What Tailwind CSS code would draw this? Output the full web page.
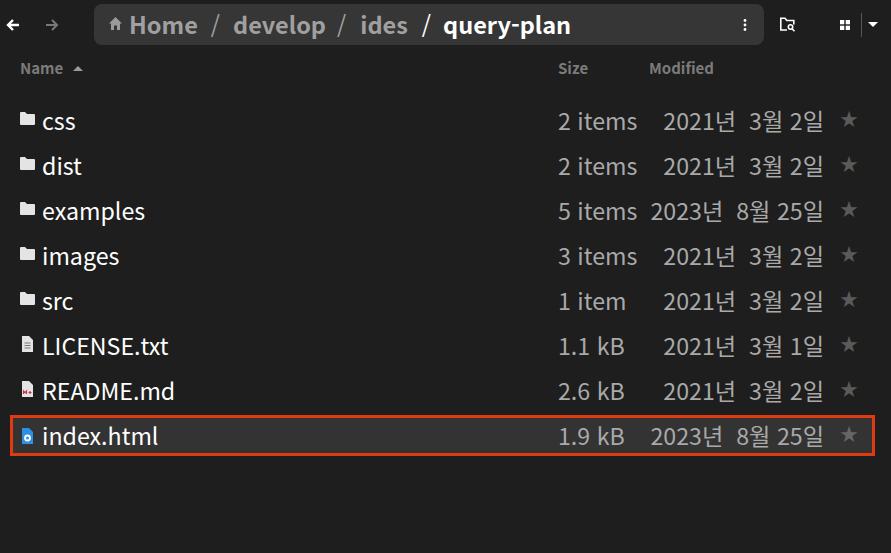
<!DOCTYPE html>
<html lang="ko">
<head>
    <meta charset="UTF-8">
    <title>query-plan</title>
    <script src="https://cdn.jsdelivr.net/npm/@tailwindcss/browser@4"></script>
</head>
<body class="bg-[#1e1e1e] w-[891px] h-[553px] overflow-hidden font-['Noto_Sans_CJK_KR','Noto_Sans',sans-serif]">

    <!-- toolbar -->
    <div class="flex items-center h-[41px] mt-1 text-white">
        <svg class="w-[14px] h-[14px] ml-[6px]" viewBox="0 0 14 14" fill="none" stroke="#fff" stroke-width="2.4"><path d="M13 7H2M7 2 2 7l5 5"/></svg>
        <svg class="w-[14px] h-[14px] ml-[25px] opacity-40" viewBox="0 0 14 14" fill="none" stroke="#fff" stroke-width="2"><path d="M1 7h11M7 2l5 5-5 5"/></svg>
        <div class="flex items-center w-[670px] h-full ml-[35px] bg-[#363636] rounded-lg pl-[15px] pr-[17px] text-[23.5px]">
            <svg class="w-[13px] h-[13px] shrink-0 mb-[3px]" viewBox="0 0 13 13" fill="#9a9a9a"><path d="M6.5 0 13 6.5h-2V13H8V8.5H5V13H2V6.5H0z"/></svg>
            <span class="ml-[7px] font-bold text-[#a0a0a0]">Home</span>
            <span class="ml-[13px] text-[#a0a0a0]">/</span>
            <span class="ml-[13px] font-bold text-[#a0a0a0]">develop</span>
            <span class="ml-[11px] text-[#a0a0a0]">/</span>
            <span class="ml-[14px] font-bold text-[#a0a0a0]">ides</span>
            <span class="ml-[14px] text-white">/</span>
            <span class="ml-[12px] font-bold text-white">query-plan</span>
            <svg class="w-[4px] h-[12px] ml-auto" viewBox="0 0 4 12" fill="#fff"><circle cx="2" cy="1.5" r="1.4"/><circle cx="2" cy="6" r="1.4"/><circle cx="2" cy="10.5" r="1.4"/></svg>
        </div>
        <svg class="w-[17px] h-[15px] ml-[15px]" viewBox="0 0 17 15" fill="none" stroke="#fff" stroke-width="1.6"><path d="M8 13H1.8V1.2H6l1.8 2.3h7v4"/><circle cx="11.5" cy="10" r="2.2"/><path d="m13 11.8 2.5 2.5"/></svg>
        <svg class="w-[10px] h-[10px] ml-[44px]" viewBox="0 0 10 10" fill="#fff"><rect width="4.3" height="4.3"/><rect x="5.7" width="4.3" height="4.3"/><rect y="5.7" width="4.3" height="4.3"/><rect x="5.7" y="5.7" width="4.3" height="4.3"/></svg>
        <div class="w-px h-[24px] bg-[#555] ml-[11px]"></div>
        <svg class="w-[10px] h-[5px] ml-[6px]" viewBox="0 0 10 5" fill="#fff"><path d="M0 0h10L5 5z"/></svg>
    </div>

    <!-- column header -->
    <div class="flex items-center h-[23px] mt-[12px] text-[15px] font-bold text-[#7b7b7b]">
        <div class="flex items-center w-[558px] pl-[20px]">
            <span>Name</span>
            <svg class="w-[10px] h-[5px] ml-[10px]" viewBox="0 0 10 5" fill="#9a9a9a"><path d="M0 5h10L5 0z"/></svg>
        </div>
        <span class="w-[91px]">Size</span>
        <span>Modified</span>
    </div>

    <!-- file list -->
    <div class="mt-[18px] flex flex-col text-[23.2px] leading-[35px] text-[#a9a9a9]">
        <div class="flex items-center h-[45px] pl-[20px]">
            <svg class="w-[15px] h-[13px] shrink-0 mb-1" viewBox="0 0 15 13" fill="#e4e4e4"><path d="M0 1a1 1 0 0 1 1-1h4l2 2h7a1 1 0 0 1 1 1v9a1 1 0 0 1-1 1H1a1 1 0 0 1-1-1z"/></svg>
            <span class="ml-[7px] w-[516px] text-white">css</span>
            <span class="w-[78px] whitespace-nowrap">2 items</span>
            <span class="w-[188px] text-right whitespace-nowrap">2021년&nbsp; 3월 2일</span>
            <span class="ml-[16px] text-[#5a5a5a] text-[18px] leading-[35px] mb-[4px]">★</span>
        </div>
        <div class="flex items-center h-[45px] pl-[20px]">
            <svg class="w-[15px] h-[13px] shrink-0 mb-1" viewBox="0 0 15 13" fill="#e4e4e4"><path d="M0 1a1 1 0 0 1 1-1h4l2 2h7a1 1 0 0 1 1 1v9a1 1 0 0 1-1 1H1a1 1 0 0 1-1-1z"/></svg>
            <span class="ml-[7px] w-[516px] text-white">dist</span>
            <span class="w-[78px] whitespace-nowrap">2 items</span>
            <span class="w-[188px] text-right whitespace-nowrap">2021년&nbsp; 3월 2일</span>
            <span class="ml-[16px] text-[#5a5a5a] text-[18px] leading-[35px] mb-[4px]">★</span>
        </div>
        <div class="flex items-center h-[45px] pl-[20px]">
            <svg class="w-[15px] h-[13px] shrink-0 mb-1" viewBox="0 0 15 13" fill="#e4e4e4"><path d="M0 1a1 1 0 0 1 1-1h4l2 2h7a1 1 0 0 1 1 1v9a1 1 0 0 1-1 1H1a1 1 0 0 1-1-1z"/></svg>
            <span class="ml-[7px] w-[516px] text-white">examples</span>
            <span class="w-[78px] whitespace-nowrap">5 items</span>
            <span class="w-[188px] text-right whitespace-nowrap">2023년&nbsp; 8월 25일</span>
            <span class="ml-[16px] text-[#5a5a5a] text-[18px] leading-[35px] mb-[4px]">★</span>
        </div>
        <div class="flex items-center h-[45px] pl-[20px]">
            <svg class="w-[15px] h-[13px] shrink-0 mb-1" viewBox="0 0 15 13" fill="#e4e4e4"><path d="M0 1a1 1 0 0 1 1-1h4l2 2h7a1 1 0 0 1 1 1v9a1 1 0 0 1-1 1H1a1 1 0 0 1-1-1z"/></svg>
            <span class="ml-[7px] w-[516px] text-white">images</span>
            <span class="w-[78px] whitespace-nowrap">3 items</span>
            <span class="w-[188px] text-right whitespace-nowrap">2021년&nbsp; 3월 2일</span>
            <span class="ml-[16px] text-[#5a5a5a] text-[18px] leading-[35px] mb-[4px]">★</span>
        </div>
        <div class="flex items-center h-[45px] pl-[20px]">
            <svg class="w-[15px] h-[13px] shrink-0 mb-1" viewBox="0 0 15 13" fill="#e4e4e4"><path d="M0 1a1 1 0 0 1 1-1h4l2 2h7a1 1 0 0 1 1 1v9a1 1 0 0 1-1 1H1a1 1 0 0 1-1-1z"/></svg>
            <span class="ml-[7px] w-[516px] text-white">src</span>
            <span class="w-[78px] whitespace-nowrap">1 item</span>
            <span class="w-[188px] text-right whitespace-nowrap">2021년&nbsp; 3월 2일</span>
            <span class="ml-[16px] text-[#5a5a5a] text-[18px] leading-[35px] mb-[4px]">★</span>
        </div>
        <div class="flex items-center h-[45px] pl-[20px]">
            <svg class="w-[15px] h-[16px] shrink-0 mb-1" viewBox="0 0 15 16"><path fill="#e4e4e4" d="M2 0h7l4 4v12H2z"/><path stroke="#777" d="M4.5 7h6M4.5 9.5h6M4.5 12h6"/></svg>
            <span class="ml-[7px] w-[516px] text-white">LICENSE.txt</span>
            <span class="w-[78px] whitespace-nowrap">1.1 kB</span>
            <span class="w-[188px] text-right whitespace-nowrap">2021년&nbsp; 3월 1일</span>
            <span class="ml-[16px] text-[#5a5a5a] text-[18px] leading-[35px] mb-[4px]">★</span>
        </div>
        <div class="flex items-center h-[45px] pl-[20px]">
            <svg class="w-[15px] h-[16px] shrink-0 mb-1" viewBox="0 0 15 16"><path fill="#e4e4e4" d="M2 0h7l4 4v12H2z"/><path stroke="#c8324a" stroke-width="1.2" fill="none" d="M3.5 13v-3l1.5 1.7L6.500 10v3M8.500 11.500h3M10 10v3"/></svg>
            <span class="ml-[7px] w-[516px] text-white">README.md</span>
            <span class="w-[78px] whitespace-nowrap">2.6 kB</span>
            <span class="w-[188px] text-right whitespace-nowrap">2021년&nbsp; 3월 2일</span>
            <span class="ml-[16px] text-[#5a5a5a] text-[18px] leading-[35px] mb-[4px]">★</span>
        </div>
        <div class="relative flex items-center h-[45px] pl-[20px] bg-[linear-gradient(#333,#333)] bg-no-repeat bg-[length:859px_35px] bg-[position:13px_5px]">
            <svg class="w-[15px] h-[16px] shrink-0" viewBox="0 0 15 16"><path fill="#2f8fe0" d="M2 0h7l4 4v12H2z"/><circle cx="7.500" cy="10" r="3.400" fill="#fff"/><circle cx="7.500" cy="10" r="1.500" fill="#2f8fe0"/></svg>
            <span class="ml-[7px] w-[516px] text-white">index.html</span>
            <span class="w-[78px] whitespace-nowrap">1.9 kB</span>
            <span class="w-[188px] text-right whitespace-nowrap">2023년&nbsp; 8월 25일</span>
            <span class="ml-[16px] text-[#666] text-[18px] leading-[35px] mb-[4px]">★</span>
            <!-- annotation box -->
            <div class="absolute left-[10px] top-[2px] w-[865px] h-[41px] border-[3px] border-[#e03a10]"></div>
        </div>
    </div>
</body>
</html>
